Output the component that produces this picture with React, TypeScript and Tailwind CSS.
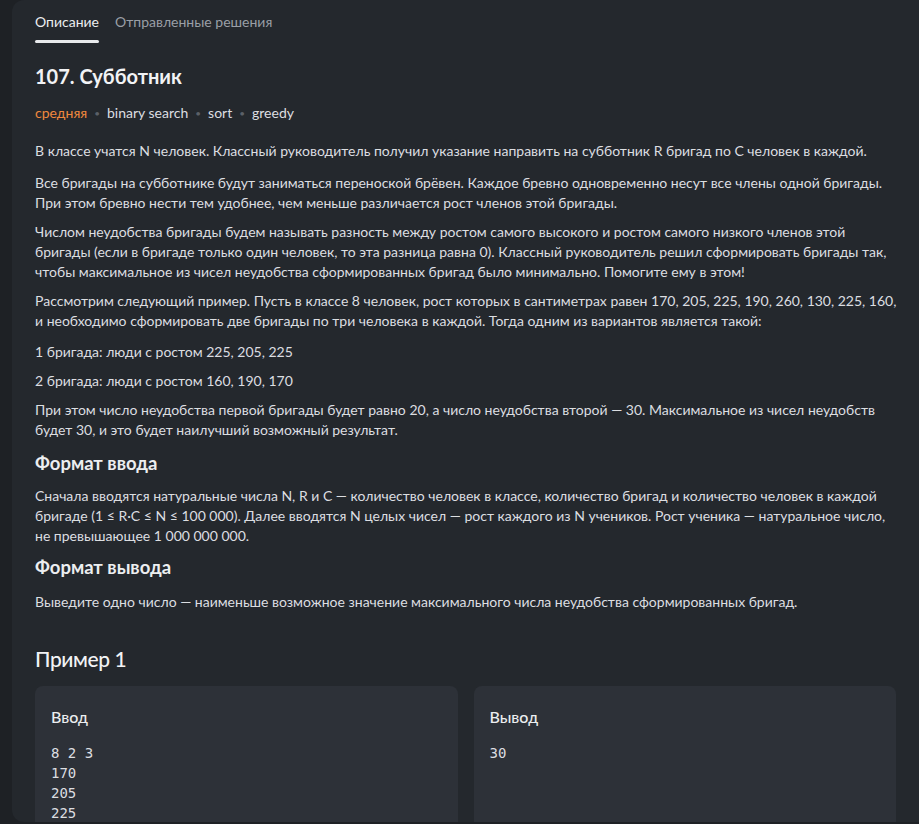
import React from "react";

const Dot = () => <span className="mx-[7px] text-[#5b6068] text-[10px] align-middle">•</span>;

const tags = ["binary search", "sort", "greedy"];

// only the lines that fit in the visible part of the panel
const inputLines = ["8 2 3", "170", "205", "225"];

const mono = { fontFamily: '"DejaVu Sans Mono", monospace' };

export default function App() {
    return (
        <div
            className="w-[919px] h-[824px] bg-[#1e2125] pl-[12px] overflow-hidden"
            style={{ fontFamily: 'Lato, "Noto Sans", sans-serif' }}
        >
            <div className="h-[822px] bg-[#24282d] rounded-l-xl pl-[23px] pr-[23px] overflow-hidden text-[#dcdee1] text-[14px] leading-5">
                {/* Tabs */}
                <div className="flex gap-[16px] pt-[12px]">
                    <div className="flex flex-col">
                        <span className="text-[14px] leading-5 text-[#eceef0]">Описание</span>
                        <div className="mt-[8px] h-[3px] bg-[#e8eaec] rounded-sm" />
                    </div>
                    <span className="text-[14px] leading-5 text-[#9a9fa6]">Отправленные решения</span>
                </div>

                {/* Title */}
                <h1 className="mt-[19px] text-[20px] leading-7 font-bold text-[#f2f3f5]">107. Субботник</h1>

                {/* Tags */}
                <div className="mt-[13px] flex items-center">
                    <span className="text-[#f0883e]">средняя</span>
                    {tags.map((t) => (
                        <React.Fragment key={t}>
                            <Dot />
                            <span className="text-[#dcdee1]">{t}</span>
                        </React.Fragment>
                    ))}
                </div>

                {/* Statement */}
                <div className="mt-[18px] mr-[-6px] space-y-[9px]">
                    <p>В классе учатся N человек. Классный руководитель получил указание направить на субботник R бригад по C человек в каждой.</p>
                    <p className="!mt-[12px]">
                        Все бригады на субботнике будут заниматься переноской брёвен. Каждое бревно одновременно несут все члены одной бригады. При этом бревно нести тем удобнее, чем меньше различается рост членов этой бригады.
                    </p>
                    <p>
                        Числом неудобства бригады будем называть разность между ростом самого высокого и ростом самого низкого членов этой бригады (если в бригаде только один человек, то эта разница равна 0). Классный руководитель решил сформировать бригады так, чтобы максимальное из чисел неудобства сформированных бригад было минимально. Помогите ему в этом!
                    </p>
                    <p>
                        Рассмотрим следующий пример. Пусть в классе 8 человек, рост которых в сантиметрах равен 170, 205, 225, 190, 260, 130, 225, 160, и необходимо сформировать две бригады по три человека в каждой. Тогда одним из вариантов является такой:
                    </p>
                    <p className="!mt-[11px]">1 бригада: люди с ростом 225, 205, 225</p>
                    <p>2 бригада: люди с ростом 160, 190, 170</p>
                    <p>
                        При этом число неудобства первой бригады будет равно 20, а число неудобства второй — 30. Максимальное из чисел неудобств будет 30, и это будет наилучший возможный результат.
                    </p>
                </div>

                {/* Input format */}
                <h2 className="mt-[11px] text-[18.5px] leading-6 font-bold text-[#eceef0]">Формат ввода</h2>
                <p className="mt-[11px]">
                    Сначала вводятся натуральные числа N, R и C — количество человек в классе, количество бригад и количество человек в каждой бригаде (1 ≤ R·C ≤ N ≤ 100 000). Далее вводятся N целых чисел — рост каждого из N учеников. Рост ученика — натуральное число, не превышающее 1 000 000 000.
                </p>

                {/* Output format */}
                <h2 className="mt-[9px] text-[18.5px] leading-6 font-bold text-[#eceef0]">Формат вывода</h2>
                <p className="mt-[13px]">Выведите одно число — наименьше возможное значение максимального числа неудобства сформированных бригад.</p>

                {/* Example */}
                <h2 className="mt-[33px] text-[21px] leading-7 font-medium tracking-[-0.4px] text-[#f2f3f5]">Пример 1</h2>
                <div className="mt-[13px] grid grid-cols-2 gap-[16px]">
                    <div className="bg-[#2d3138] rounded-lg px-[16px] pt-[21px] pb-4 min-h-[200px]">
                        <div className="text-[16px] font-medium text-[#eceef0]">Ввод</div>
                        <pre className="mt-[16px] text-[14px] leading-5 text-[#dcdee1]" style={mono}>
                            {inputLines.join("\n")}
                        </pre>
                    </div>
                    <div className="bg-[#2d3138] rounded-lg px-[16px] pt-[21px] pb-4 min-h-[200px]">
                        <div className="text-[16px] font-medium text-[#eceef0]">Вывод</div>
                        <pre className="mt-[16px] text-[14px] leading-5 text-[#dcdee1]" style={mono}>
                            30
                        </pre>
                    </div>
                </div>
            </div>
        </div>
    );
}
